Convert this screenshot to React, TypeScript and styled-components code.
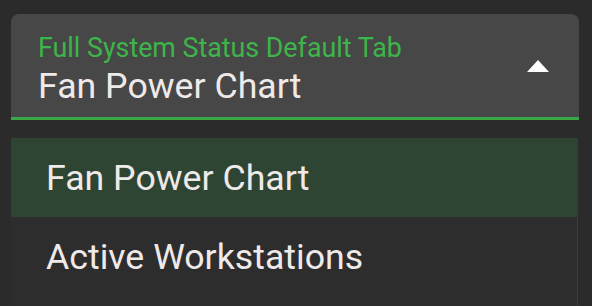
import styled, { createGlobalStyle } from "styled-components";

const GlobalStyle = createGlobalStyle`
  html, body {
    margin: 0;
    padding: 0;
    background: #2b2b2b;
    font-family: Roboto, "Noto Sans", sans-serif;
  }
`;

const Page = styled.div`
  width: 592px;
  height: 306px;
  padding: 14px 13px 0 11px;
  box-sizing: border-box;
  overflow: hidden;
  display: flex;
  flex-direction: column;
  gap: 18px;
`;

const Field = styled.div`
  height: 106px;
  background: #474747;
  border-radius: 8px 8px 0 0;
  border-bottom: 3px solid #3aa845;
  box-sizing: border-box;
  display: flex;
  align-items: flex-start;
  padding: 19px 30px 0 27px;
`;

const FieldText = styled.div`
  flex: 1;
  display: flex;
  flex-direction: column;
  gap: 3px;
`;

const Label = styled.span`
  color: #3db54a;
  font-size: 26.8px;
  line-height: 30px;
  white-space: nowrap;
`;

const Value = styled.span`
  color: #efeaea;
  font-size: 35.7px;
  line-height: 40px;
  white-space: nowrap;
`;

const Arrow = styled.div`
  width: 0;
  height: 0;
  border-left: 11px solid transparent;
  border-right: 11px solid transparent;
  border-bottom: 12px solid #ffffff;
  margin-top: 27px;
`;

const Menu = styled.ul`
  margin: 0;
  padding: 0;
  list-style: none;
  background: #2d2d2d;
  border-right: 1px solid #3a3a3a;
  margin-right: 1px;
  flex: 1;
`;

const Item = styled.li<{ $selected?: boolean }>`
  height: 79px;
  display: flex;
  align-items: center;
  padding-left: 35px;
  font-size: 35.7px;
  color: #efeaea;
  white-space: nowrap;
  background: ${(p) => (p.$selected ? "#2f4533" : "transparent")};
`;

function App() {
  return (
    <>
      <GlobalStyle />
      <Page>
        <Field>
          <FieldText>
            <Label>Full System Status Default Tab</Label>
            <Value>Fan Power Chart</Value>
          </FieldText>
          <Arrow />
        </Field>
        <Menu>
          <Item $selected>Fan Power Chart</Item>
          <Item>Active Workstations</Item>
        </Menu>
      </Page>
    </>
  );
}

export default App;
